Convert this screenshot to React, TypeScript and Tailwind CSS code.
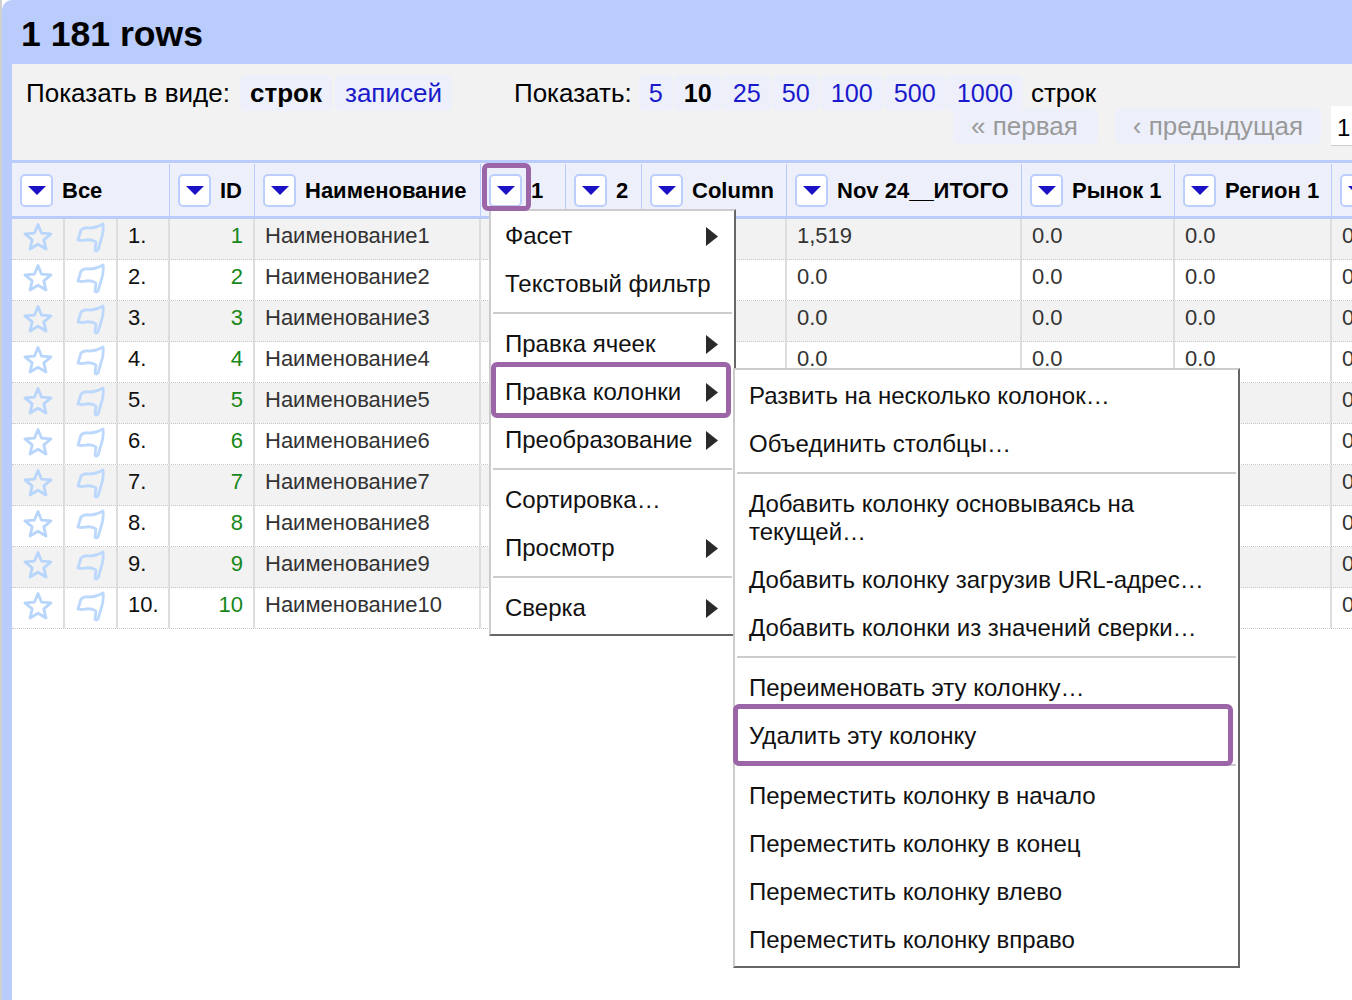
const columns = 'grid-cols-[53px_53px_52px_85px_226px_85px_76px_145px_235px_153px_157px_60px]';

const headers = ['ID', 'Наименование', '1', '2', 'Column', 'Nov 24__ИТОГО', 'Рынок 1', 'Регион 1', ''];

const rows = Array.from({ length: 10 }, (_, i) => i + 1);

function DropButton() {
  return (
    <span className="flex h-[33px] w-[33px] shrink-0 items-center justify-center rounded-[5px] border-2 border-[#bccffc] bg-white">
      <svg width="18" height="9" viewBox="0 0 18 9">
        <path d="M0 0H18L9 9Z" fill="#1a12c4" />
      </svg>
    </span>
  );
}

function StarIcon() {
  return (
    <svg width="30" height="30" viewBox="0 0 30 30" className="blur-[0.5px]">
      <path
        d="M15 2.5L18.6 11.2L28 11.9L20.8 17.9L23 27L15 22.2L7 27L9.2 17.9L2 11.9L11.4 11.2Z"
        fill="none"
        stroke="#b8d5fc"
        strokeWidth="2.8"
        strokeLinejoin="round"
      />
    </svg>
  );
}

function FlagIcon() {
  return (
    <svg width="30" height="31" viewBox="0 0 30 31" className="blur-[0.5px]">
      <path
        d="M2 18L5 8Q8 5 13 6Q20 6 27 2Q28 10 25 18L22 28Q20 30 19 28L20 20Q16 17 10 18Q5 19 2 18Z"
        fill="none"
        stroke="#bcd8fc"
        strokeWidth="2.8"
        strokeLinejoin="round"
      />
    </svg>
  );
}

function Chip({ children, active = false }: { children: React.ReactNode; active?: boolean }) {
  return (
    <span className={`rounded-[6px] bg-[#edf0fa] px-[10px] leading-[36px] ${active ? 'font-bold text-black' : 'text-[#1a1acb]'}`}>
      {children}
    </span>
  );
}

function MenuItem({ label, arrow = false }: { label: string; arrow?: boolean }) {
  return (
    <div className="flex h-[48px] items-center justify-between pr-[16px] pl-[14px]">
      <span>{label}</span>
      {arrow && (
        <svg width="12" height="19" viewBox="0 0 12 19">
          <path d="M0 0L12 9.5L0 19Z" fill="#2a2a2a" />
        </svg>
      )}
    </div>
  );
}

function Separator() {
  return <div className="mx-[2px] mt-[4px] mb-[6px] h-[2px] bg-[#ccc]" />;
}

function SubItem({ label }: { label: string }) {
  return <div className="flex h-[48px] items-center pr-[15px] pl-[14px]">{label}</div>;
}

export default function App() {
  return (
    <div className="relative flex h-[1000px] w-[1352px] overflow-hidden bg-white text-[22px] text-[#111] font-['Liberation_Sans',Arial,sans-serif]">
      {/* outer strip */}
      <div className="h-full w-[2px] shrink-0 bg-[#d0d0d0]" />
      <div className="flex h-full w-[1350px] shrink-0 flex-col rounded-tl-[10px] bg-[#b9ccfc] pl-[10px]">
        <div className="h-[64px] shrink-0 pl-[9px] text-[35.6px] leading-[68px] font-bold text-black">1 181 rows</div>

        <div className="flex min-h-0 flex-1 flex-col bg-white">
          {/* Toolbar */}
          <div className="flex h-[96px] shrink-0 flex-col bg-[#f2f2f2] pt-[11px] text-[26px] text-black">
            <div className="flex h-[36px] items-center whitespace-nowrap pl-[14px]">
              <span className="mr-[10px]">Показать в виде:</span>
              <Chip active>строк</Chip>
              <span className="w-[3px]" />
              <Chip>записей</Chip>
              <span className="ml-[62px] mr-[7px]">Показать:</span>
              <div className="flex items-center gap-[1px] text-[25.2px]">
                <Chip>5</Chip>
                <Chip active>10</Chip>
                <Chip>25</Chip>
                <Chip>50</Chip>
                <Chip>100</Chip>
                <Chip>500</Chip>
                <Chip>1000</Chip>
              </div>
              <span className="ml-[8px]">строк</span>
            </div>
            <div className="-mt-[3px] flex h-[36px] items-center gap-[17px] whitespace-nowrap pl-[941px]">
              <span className="rounded-[6px] bg-[#edf0fa] pr-[20px] pl-[18px] leading-[36px] text-[#9a9a9a]">« первая</span>
              <span className="rounded-[6px] bg-[#edf0fa] px-[18px] leading-[36px] text-[#9a9a9a]">‹ предыдущая</span>
              <span className="-ml-[7px] h-[40px] w-[40px] shrink-0 border-b border-[#ccc] bg-white pl-[6px] text-[24px] leading-[44px]">1</span>
            </div>
          </div>

          {/* Header */}
          <div className={`grid h-[59px] shrink-0 border-y-[3px] border-[#b9ccfc] bg-[#edf0fa] pt-[1px] ${columns}`}>
            <div className="col-span-3 flex items-center gap-[9px] border-r border-[#b9ccfc] pl-[8px]">
              <DropButton />
              <span className="font-bold text-black">Все</span>
            </div>
            {headers.map((label, i) => (
              <div key={i} className="flex items-center gap-[9px] overflow-hidden whitespace-nowrap border-r border-[#b9ccfc] pl-[8px]">
                <DropButton />
                <span className="font-bold text-black">{label}</span>
              </div>
            ))}
          </div>

          {/* Rows */}
          {rows.map((n) => (
            <div
              key={n}
              className={`grid h-[41px] shrink-0 border-b border-dotted border-[#c8c8c8] leading-[33px] text-[#333] ${columns} ${n % 2 === 1 ? 'bg-[#f2f2f2]' : 'bg-white'}`}
            >
              <div className="flex justify-center border-r-2 border-[#ddd] pt-[3px]">
                <StarIcon />
              </div>
              <div className="flex justify-center border-r-2 border-[#ddd] pt-[3px]">
                <FlagIcon />
              </div>
              <div className="border-r-2 border-[#ddd] pl-[10px] text-[#111]">{n}.</div>
              <div className="border-r-2 border-[#ddd] pr-[10px] text-right text-[#17881a]">{n}</div>
              <div className="border-r-2 border-[#ddd] pl-[10px] whitespace-nowrap">Наименование{n}</div>
              <div className="border-r-2 border-[#ddd]" />
              <div className="border-r-2 border-[#ddd]" />
              <div className="border-r-2 border-[#ddd]" />
              <div className="border-r-2 border-[#ddd] pl-[10px]">{n === 1 ? '1,519' : '0.0'}</div>
              <div className="border-r-2 border-[#ddd] pl-[10px]">0.0</div>
              <div className="border-r-2 border-[#ddd] pl-[10px]">0.0</div>
              <div className="pl-[10px]">0</div>
            </div>
          ))}
        </div>
      </div>

      {/* Column menu */}
      <div className="absolute top-[209px] left-[489px] w-[247px] border-2 border-t-[#ccc] border-r-[#666] border-b-[#666] border-l-[#ccc] bg-white pt-[1px] pb-[2px] text-[24px] whitespace-nowrap">
        <MenuItem label="Фасет" arrow />
        <MenuItem label="Текстовый фильтр" />
        <Separator />
        <MenuItem label="Правка ячеек" arrow />
        <MenuItem label="Правка колонки" arrow />
        <MenuItem label="Преобразование" arrow />
        <Separator />
        <MenuItem label="Сортировка…" />
        <MenuItem label="Просмотр" arrow />
        <Separator />
        <MenuItem label="Сверка" arrow />
      </div>

      {/* Submenu */}
      <div className="absolute top-[368px] left-[733px] w-[507px] border-2 border-t-[#ccc] border-r-[#666] border-b-[#666] border-l-[#ccc] bg-white pt-[2px] pb-[2px] text-[24px]">
        <SubItem label="Развить на несколько колонок…" />
        <SubItem label="Объединить столбцы…" />
        <Separator />
        <div className="py-[10px] pr-[15px] pl-[14px] leading-[28px]">Добавить колонку основываясь на текущей…</div>
        <SubItem label="Добавить колонку загрузив URL-адрес…" />
        <SubItem label="Добавить колонки из значений сверки…" />
        <Separator />
        <SubItem label="Переименовать эту колонку…" />
        <SubItem label="Удалить эту колонку" />
        <Separator />
        <SubItem label="Переместить колонку в начало" />
        <SubItem label="Переместить колонку в конец" />
        <SubItem label="Переместить колонку влево" />
        <SubItem label="Переместить колонку вправо" />
      </div>

      {/* Purple annotations */}
      <div className="absolute top-[163px] left-[482px] h-[48px] w-[49px] rounded-[6px] border-[5px] border-[#9c65a8]" />
      <div className="absolute top-[362px] left-[491px] h-[56px] w-[240px] rounded-[6px] border-[5px] border-[#9c65a8]" />
      <div className="absolute top-[704px] left-[733px] h-[62px] w-[500px] rounded-[6px] border-[5px] border-[#9c65a8]" />
    </div>
  );
}
